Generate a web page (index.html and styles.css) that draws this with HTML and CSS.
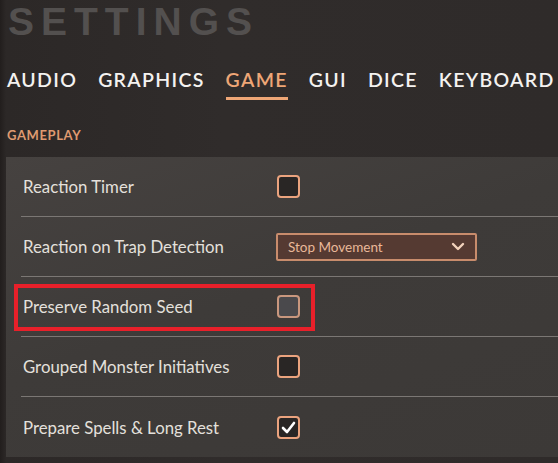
FILE: index.html
```html
<!DOCTYPE html>
<html lang="en">
<head>
    <meta charset="UTF-8">
    <title>Settings</title>
    <link rel="stylesheet" href="styles.css">
</head>
<body>
    <h1 class="title">SETTINGS</h1>

    <nav class="tabs">
        <span class="tab">AUDIO</span>
        <span class="tab">GRAPHICS</span>
        <span class="tab active">GAME</span>
        <span class="tab">GUI</span>
        <span class="tab">DICE</span>
        <span class="tab">KEYBOARD</span>
    </nav>

    <h2 class="section">GAMEPLAY</h2>

    <div class="panel">
        <div class="row">
            <span class="label">Reaction Timer</span>
            <span class="check"></span>
        </div>
        <div class="row">
            <span class="label">Reaction on Trap Detection</span>
            <div class="select">
                <span>Stop Movement</span>
                <svg class="chevron" width="14" height="9" viewBox="0 0 14 9">
                    <path d="M2 2 L7 7 L12 2" fill="none" stroke="#f2d2bc" stroke-width="2.4" stroke-linecap="round" stroke-linejoin="round"/>
                </svg>
            </div>
        </div>
        <div class="row marked">
            <span class="label">Preserve Random Seed</span>
            <span class="check disabled"></span>
        </div>
        <div class="row">
            <span class="label">Grouped Monster Initiatives</span>
            <span class="check"></span>
        </div>
        <div class="row">
            <span class="label">Prepare Spells &amp; Long Rest</span>
            <span class="check">
                <svg width="19" height="19" viewBox="0 0 19 19">
                    <path d="M4 10 L8 14 L15 5" fill="none" stroke="#ffffff" stroke-width="2.6" stroke-linecap="round" stroke-linejoin="round"/>
                </svg>
            </span>
        </div>
    </div>
</body>
</html>
```

FILE: styles.css
```css
body {
    margin: 0;
    width: 558px;
    height: 463px;
    overflow: hidden;
    background: linear-gradient(90deg, #221e1d 0, #2c2827 6px, #302c2b 40%, #2f2b2a 100%);
    color: #e2dedb;
    font-family: 'Lato', 'Noto Sans', sans-serif;
}
.title {
    margin: 2px 0 0 8px;
    font-family: 'Liberation Sans', Arial, sans-serif;
    font-weight: bold;
    font-size: 39px;
    line-height: 39px;
    letter-spacing: 7px;
    color: #53504f;
}
.tabs {
    display: flex;
    gap: 21px;
    margin: 27px 0 0 7px;
}
.tab {
    font-size: 19.5px;
    line-height: 24px;
    letter-spacing: 1.3px;
    font-weight: 600;
    color: #f4f2f0;
    padding-bottom: 5px;
    border-bottom: 3px solid transparent;
}
.tab.active {
    color: #eea676;
    border-bottom-color: #eea676;
}
.section {
    margin: 27px 0 14px 7px;
    font-size: 13px;
    line-height: 16px;
    font-weight: bold;
    letter-spacing: 0.6px;
    color: #df9a70;
}
.panel {
    margin-left: 6px;
    background: linear-gradient(160deg, #464240 0, #3e3b39 45%, #3c3937 100%);
}
.row {
    position: relative;
    box-sizing: border-box;
    height: 60px;
    margin-left: 15px;
    padding-left: 2px;
    display: grid;
    grid-template-columns: 254px 1fr;
    align-items: center;
    border-bottom: 1px solid #7b7774;
}
.row:last-child {
    border-bottom: none;
}
.label {
    font-size: 16.8px;
    color: #e4e0dc;
}
.check {
    box-sizing: border-box;
    width: 23px;
    height: 23px;
    border: 2px solid #eba37e;
    border-radius: 4px;
    background: #292625;
    display: flex;
    align-items: center;
    justify-content: center;
}
.check.disabled {
    background: #4a494c;
    border-color: #c9977e;
}
.select {
    box-sizing: border-box;
    width: 201px;
    height: 28px;
    margin-left: -1px;
    padding: 0 10px;
    display: flex;
    align-items: center;
    justify-content: space-between;
    background: #553a32;
    border: 2px solid #c88c6c;
    border-radius: 2px;
    font-size: 13.5px;
    color: #e9b899;
}
.row.marked::after {
    content: "";
    position: absolute;
    left: -7px;
    top: 7px;
    width: 301px;
    height: 47px;
    box-sizing: border-box;
    border: 4px solid #e8202a;
}
```
